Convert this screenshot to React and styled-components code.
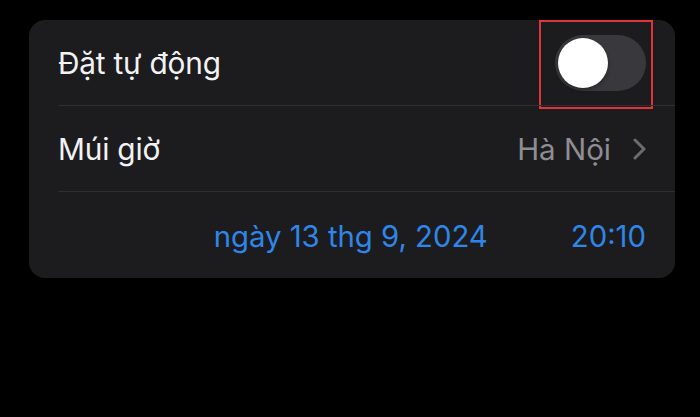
import React from 'react';
import styled, { createGlobalStyle } from 'styled-components';

const GlobalStyle = createGlobalStyle`
    body {
        margin: 0;
        background: #000;
        font-family: Inter, "Noto Sans", sans-serif;
        -webkit-font-smoothing: antialiased;
    }
`;

const Page = styled.div`
    width: 700px;
    height: 417px;
    background: #000;
    padding: 20px 25px 0 29px;
    box-sizing: border-box;
`;

const Card = styled.div`
    background: #1c1c1e;
    border-radius: 16px;
    overflow: hidden;
`;

const Row = styled.div`
    position: relative;
    height: 86px;
    display: flex;
    align-items: center;
    justify-content: ${p => p.end ? 'flex-end' : 'space-between'};
    padding: 0 29px;
    gap: ${p => p.end ? '83px' : '0'};
    ${p => p.divider && `
        &::after {
            content: '';
            position: absolute;
            left: 29px;
            right: 0;
            bottom: 0;
            height: 1px;
            background: #2f2f32;
        }
    `}
`;

const Label = styled.span`
    color: #f2f2f4;
    font-size: 29.8px;
    letter-spacing: -0.2px;
`;

const Value = styled.span`
    display: flex;
    align-items: center;
    gap: 22px;
    color: #8d8d93;
    font-size: 29.5px;
`;

const Blue = styled.span`
    color: #2f86e8;
    font-size: 29.3px;
    padding-top: 2px;
`;

const ToggleWrap = styled.div`
    position: relative;
    display: flex;
`;

const Highlight = styled.span`
    position: absolute;
    left: -16px;
    right: -7px;
    top: -15px;
    bottom: -18px;
    border: 2px solid #e0333a;
`;

const Track = styled.div`
    width: 91px;
    height: 56px;
    border-radius: 28px;
    background: #39393d;
    display: flex;
    align-items: center;
    padding: 0 3px;
    box-sizing: border-box;
`;

const Knob = styled.div`
    width: 50px;
    height: 50px;
    border-radius: 50%;
    background: #fff;
    box-shadow: 0 2px 4px rgba(0,0,0,0.35);
`;

const Chevron = () => (
    <svg width="13" height="22" viewBox="0 0 13 22" fill="none">
        <path d="M2 2l9 9-9 9" stroke="#6b6b70" strokeWidth="3" strokeLinecap="round" strokeLinejoin="round" />
    </svg>
);

export default function App() {
    return (
        <Page>
            <GlobalStyle />
            <Card>
                <Row divider>
                    <Label>Đặt tự động</Label>
                    <ToggleWrap>
                        <Track><Knob /></Track>
                        <Highlight />
                    </ToggleWrap>
                </Row>
                <Row divider>
                    <Label>Múi giờ</Label>
                    <Value>Hà Nội <Chevron /></Value>
                </Row>
                <Row end>
                    <Blue>ngày 13 thg 9, 2024</Blue>
                    <Blue>20:10</Blue>
                </Row>
            </Card>
        </Page>
    );
}
